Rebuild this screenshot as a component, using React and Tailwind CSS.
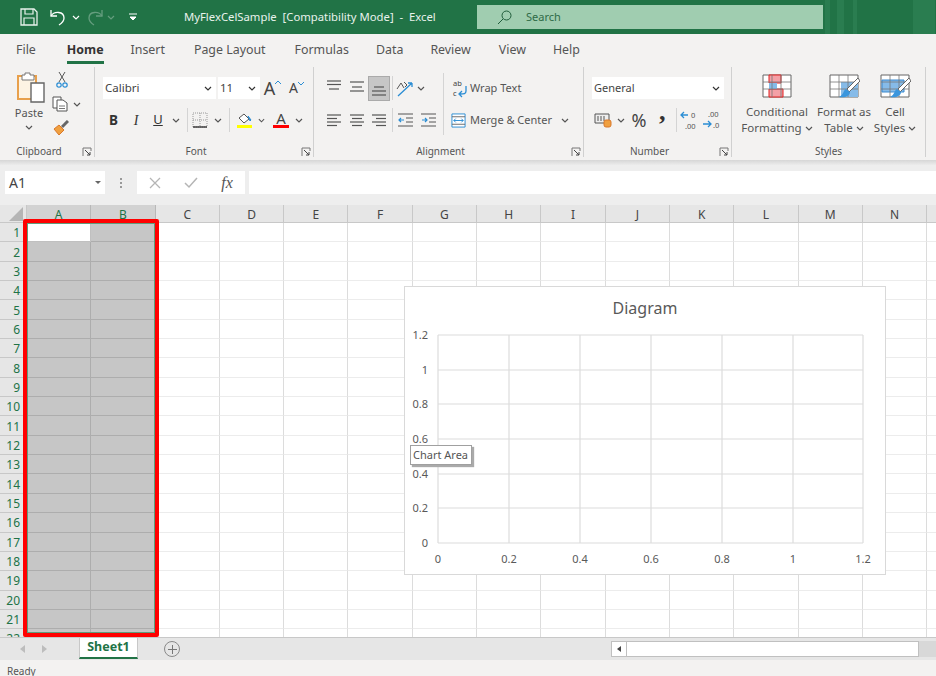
import React from 'react';

const columns = ['A', 'B', 'C', 'D', 'E', 'F', 'G', 'H', 'I', 'J', 'K', 'L', 'M', 'N', ''];
const rows = Array.from({ length: 22 }, (_, i) => i + 1);
const tabs = [
    ['File', 'ml-[16px]'], ['Home', 'ml-[31px]'], ['Insert', 'ml-[27px]'], ['Page Layout', 'ml-[29px]'],
    ['Formulas', 'ml-[29px]'], ['Data', 'ml-[27px]'], ['Review', 'ml-[27px]'], ['View', 'ml-[28px]'], ['Help', 'ml-[27px]'],
];

const Chev = ({ className = 'text-[#555]' }) => (
    <svg width="8" height="5" viewBox="0 0 8 5" className={className}>
        <path d="M1 1l3 3 3-3" fill="none" stroke="currentColor" strokeWidth="1.2" />
    </svg>
);

const Slot = ({ w, children }) => (
    <div className={`${w} h-full flex items-center justify-center shrink-0`}>{children}</div>
);

const Sep = ({ className = 'h-[24px]' }) => <div className={`w-px bg-[#d4d4d4] shrink-0 ${className}`}></div>;

const Lines = ({ rows }) => (
    <svg width="16" height="16" viewBox="0 0 16 16">
        {rows.map(([x1, x2, y]) => <path key={y} d={`M${x1} ${y}H${x2}`} stroke="#555" strokeWidth="1.2" />)}
    </svg>
);

const Launcher = () => (
    <svg width="10" height="10" viewBox="0 0 10 10" className="absolute right-[2px] top-[1px]">
        <path d="M1 9V1h8v3" fill="none" stroke="#777" />
        <path d="M3 3l5 5M8 5v3H5" fill="none" stroke="#444" />
    </svg>
);

function Group({ w, label, launcher = true, children }) {
    return (
        <div className={`${w} h-[90px] flex flex-col shrink-0 border-r border-[#d0d0d0] mt-[1px] relative`}>
            <div className="flex-1 min-h-0">{children}</div>
            <div className={`relative h-[11px] text-center text-[10px] leading-[11px] text-[#555] ${launcher ? 'pr-[16px]' : ''}`}>
                {label}
                {launcher && <Launcher />}
            </div>
        </div>
    );
}

function Combo({ w, text, size = 'text-[11.5px]' }) {
    return (
        <div className={`${w} h-[22px] bg-white flex items-center justify-between pl-[2px] pr-[4px] ${size} text-[#444] shrink-0`}>
            <span>{text}</span><Chev className="text-[#333]" />
        </div>
    );
}

function TableIcon({ kind }) {
    return (
        <svg width="32" height="24" viewBox="0 0 32 24">
            <path d="M2 1h28v22H2z" fill="#fff" stroke="#666" />
            {kind === 'cond' && <>
                <path d="M8 1h12v8H8zM8 15h14v8H8z" fill="#f4a0a6" stroke="#e02020" />
                <path d="M8 9h8v6H8z" fill="#86bbe8" />
            </>}
            {kind === 'table' && <path d="M13 8h17v15H13z" fill="#86bbe8" />}
            {kind === 'cell' && <path d="M3 6h22v12H3z" fill="#86bbe8" stroke="#3a8ad0" />}
            <path d="M2 8h28M2 15h28M11 1v22M20 1v22" fill="none" stroke="#777" strokeWidth="0.8" />
            {kind !== 'cond' && <>
                <path d="M30 4L19 15l2 3L32 7z" fill="#fff" stroke="#666" />
                <path d="M18 15c-3 1-2 6-7 8 6 1 11-1 11-5z" fill="#3a96dd" />
            </>}
        </svg>
    );
}

function StyleItem({ w, kind, a, b }) {
    return (
        <div className={`${w} h-full flex flex-col items-center shrink-0 pt-[7px]`}>
            <TableIcon kind={kind} />
            <div className="mt-[6px] text-[11.5px] leading-[16px] text-center text-[#555] whitespace-nowrap">{a}</div>
            <div className="text-[11.5px] leading-[16px] text-[#555] whitespace-nowrap flex items-center gap-[3px]">{b}<Chev /></div>
        </div>
    );
}

function Ribbon() {
    return (
        <div className="h-[94px] flex">
            <Group w="w-[95px]" label="Clipboard">
                <div className="flex h-full">
                    <div className="w-[57px] flex flex-col items-center pt-[5px] pl-[1px]">
                        <svg width="32" height="32" viewBox="0 0 32 32">
                            <path d="M5 4h18v23H5z" fill="#fdf3e3" stroke="#e8a04c" strokeWidth="2" />
                            <path d="M12 1h5v2h4v5H9V3h3z" fill="#fff" stroke="#777" />
                            <path d="M18 11h13v19H18z" fill="#fff" stroke="#666" strokeWidth="1.4" />
                        </svg>
                        <div className="mt-[1px] text-[11px] leading-[16px] text-[#555]">Paste</div>
                        <div className="mt-[4px]"><Chev /></div>
                    </div>
                    <div className="flex flex-col pt-[5px]">
                        <svg width="12" height="16" viewBox="0 0 12 16" className="ml-[-1px]">
                            <path d="M3 0l6 10M9 0L3 10" stroke="#555" fill="none" />
                            <circle cx="3" cy="13" r="2.2" fill="none" stroke="#2a8dd4" strokeWidth="1.2" />
                            <circle cx="9" cy="13" r="2.2" fill="none" stroke="#2a8dd4" strokeWidth="1.2" />
                        </svg>
                        <div className="flex items-center gap-[5px] mt-[8px] ml-[-5px]">
                            <svg width="16" height="16" viewBox="0 0 16 16">
                                <path d="M1 1h8v11H1z" fill="#fff" stroke="#555" />
                                <path d="M5 4h6l4 3v8H5z" fill="#fff" stroke="#555" />
                                <path d="M7 10h6M7 12.5h6" stroke="#777" />
                            </svg>
                            <Chev />
                        </div>
                        <svg width="16" height="15" viewBox="0 0 16 15" className="mt-[8px] ml-[-4px]">
                            <path d="M1 9l5 6 5-5-5-5z" fill="#f0a040" stroke="#d9782a" />
                            <path d="M9 7l6-6" stroke="#666" strokeWidth="3" />
                        </svg>
                    </div>
                </div>
            </Group>

            <Group w="w-[219px]" label="Font">
                <div className="pl-[8px] pt-[10px]">
                    <div className="flex h-[22px] items-center">
                        <Combo w="w-[113px]" text="Calibri" />
                        <div className="w-[2px]"></div>
                        <Combo w="w-[42px]" text="11" />
                        <Slot w="w-[25px]">
                            <span className="text-[18px] text-[#444] leading-none">A</span>
                            <svg width="6" height="4" viewBox="0 0 6 4" className="mb-[10px] text-[#2a8dd4]"><path d="M0 3l3-3 3 3" fill="none" stroke="currentColor" /></svg>
                        </Slot>
                        <Slot w="w-[23px]">
                            <span className="text-[14px] text-[#444] leading-none">A</span>
                            <svg width="6" height="4" viewBox="0 0 6 4" className="mb-[8px] text-[#2a8dd4]"><path d="M0 0l3 3 3-3" fill="none" stroke="currentColor" /></svg>
                        </Slot>
                    </div>
                    <div className="flex h-[24px] items-center mt-[9px]">
                        <Slot w="w-[21px]"><span className="font-bold text-[13.5px] text-[#333]">B</span></Slot>
                        <Slot w="w-[24px]"><span className="italic text-[14px] text-[#333]" style={{ fontFamily: 'Liberation Serif, serif' }}>I</span></Slot>
                        <Slot w="w-[20px]"><span className="underline text-[13px] text-[#333]">U</span></Slot>
                        <Slot w="w-[16px]"><Chev /></Slot>
                        <div className="w-[3px]"></div>
                        <Sep />
                        <Slot w="w-[24px]">
                            <svg width="16" height="16" viewBox="0 0 16 16">
                                <path d="M1 1h14v14H1zM8 1v14M1 8h14" fill="none" stroke="#999" strokeDasharray="1 1" />
                                <path d="M1 15h14" stroke="#333" strokeWidth="1.4" />
                            </svg>
                        </Slot>
                        <Slot w="w-[12px]"><Chev /></Slot>
                        <div className="w-[5px]"></div>
                        <Sep />
                        <Slot w="w-[28px]">
                            <svg width="17" height="17" viewBox="0 0 17 17">
                                <path d="M3 6l5-4 5 5-5 4z" fill="#fff" stroke="#555" />
                                <path d="M12 4l3 4-1 1z" fill="#2a8dd4" stroke="#2a8dd4" />
                                <path d="M1 13h15v3H1z" fill="#ffff00" />
                            </svg>
                        </Slot>
                        <Slot w="w-[7px]"><Chev /></Slot>
                        <div className="w-[4px]"></div>
                        <Slot w="w-[24px]">
                            <div className="flex flex-col items-center">
                                <span className="text-[15px] leading-[13px] text-[#444]">A</span>
                                <div className="w-[16px] h-[3px] bg-[#ff0000]"></div>
                            </div>
                        </Slot>
                        <Slot w="w-[12px]"><Chev /></Slot>
                    </div>
                </div>
            </Group>

            <Group w="w-[270px]" label="Alignment">
                <div className="flex h-full">
                    <div className="w-[129px] pl-[8px] pt-[8px] shrink-0">
                        <div className="flex h-[26px] items-center">
                            <Slot w="w-[23px]"><Lines rows={[[1, 15, 1], [1, 15, 4.5], [3, 13, 9]]} /></Slot>
                            <Slot w="w-[23px]"><Lines rows={[[1, 15, 2], [3, 13, 7], [1, 15, 11]]} /></Slot>
                            <div className="w-[22px] h-[25px] bg-[#c6c6c6] border border-[#aaa] flex items-center justify-center"><Lines rows={[[3, 13, 7], [1, 15, 11], [1, 15, 15]]} /></div>
                            <div className="w-[2px]"></div>
                            <Sep />
                            <Slot w="w-[24px]">
                                <svg width="18" height="17" viewBox="0 0 18 17">
                                    <path d="M2 16L16 3M16 3h-4M16 3v4" fill="none" stroke="#2a8dd4" strokeWidth="1.3" />
                                    <path d="M1 9l4-6 3 5M8 2l3 3-2 2" fill="none" stroke="#555" />
                                </svg>
                            </Slot>
                            <Slot w="w-[8px]"><Chev /></Slot>
                        </div>
                        <div className="flex h-[24px] items-center mt-[7px]">
                            <Slot w="w-[23px]"><Lines rows={[[1, 15, 3], [1, 11, 6.5], [1, 15, 10], [1, 11, 13.5]]} /></Slot>
                            <Slot w="w-[23px]"><Lines rows={[[1, 15, 3], [3, 13, 6.5], [1, 15, 10], [3, 13, 13.5]]} /></Slot>
                            <Slot w="w-[22px]"><Lines rows={[[1, 15, 3], [5, 15, 6.5], [1, 15, 10], [5, 15, 13.5]]} /></Slot>
                            <div className="w-[2px]"></div>
                            <Sep />
                            <Slot w="w-[25px]">
                                <svg width="16" height="14" viewBox="0 0 16 14">
                                    <path d="M0 1h15M8 5h7M8 9h7M0 13h15" stroke="#555" />
                                    <path d="M6 7H1M3 5L1 7l2 2" fill="none" stroke="#2a8dd4" strokeWidth="1.2" />
                                </svg>
                            </Slot>
                            <Slot w="w-[21px]">
                                <svg width="16" height="14" viewBox="0 0 16 14">
                                    <path d="M0 1h15M8 5h7M8 9h7M0 13h15" stroke="#555" />
                                    <path d="M1 7h5M4 5l2 2-2 2" fill="none" stroke="#2a8dd4" strokeWidth="1.2" />
                                </svg>
                            </Slot>
                        </div>
                    </div>
                    <Sep className="h-[62px] mt-[6px]" />
                    <div className="pt-[8px]">
                        <div className="flex h-[26px] items-center ml-[9px]">
                            <svg width="15" height="18" viewBox="0 0 15 18" className="overflow-visible">
                                <text x="0" y="7" fontSize="7.5" fill="#444">ab</text>
                                <text x="0" y="17" fontSize="7.5" fill="#444">c</text>
                                <path d="M13 7v5c0 3-2 3-6 3M9 12l-3 3 3 3" fill="none" stroke="#2a8dd4" strokeWidth="1.3" />
                            </svg>
                            <span className="ml-[2px] text-[11px] text-[#555]">Wrap Text</span>
                        </div>
                        <div className="flex h-[24px] items-center ml-[7px] mt-[7px]">
                            <svg width="15" height="15" viewBox="0 0 16 16">
                                <path d="M1 1h14v14H1z" fill="#fff" stroke="#2a8dd4" />
                                <path d="M1 4h14M1 12h14" stroke="#666" />
                                <path d="M3 8h10M5 6L3 8l2 2M11 6l2 2-2 2" fill="none" stroke="#2a8dd4" />
                            </svg>
                            <span className="ml-[4px] text-[11px] text-[#555] whitespace-nowrap">Merge &amp; Center</span>
                            <div className="ml-[9px] flex"><Chev /></div>
                        </div>
                    </div>
                </div>
            </Group>

            <Group w="w-[148px]" label="Number">
                <div className="pl-[8px] pt-[10px]">
                    <Combo w="w-[132px]" text="General" size="text-[11px]" />
                    <div className="flex h-[24px] items-center mt-[9px]">
                        <Slot w="w-[22px]">
                            <svg width="18" height="16" viewBox="0 0 18 16">
                                <path d="M1 2h14v9H1z" fill="#eee" stroke="#555" />
                                <path d="M4 4v5M7 4v5M10 4v5" stroke="#555" />
                                <rect x="10" y="8" width="7" height="7" rx="2" fill="#f0a040" stroke="#d9782a" />
                            </svg>
                        </Slot>
                        <Slot w="w-[14px]"><Chev /></Slot>
                        <Slot w="w-[22px]"><span className="text-[18px] text-[#444] leading-none">%</span></Slot>
                        <Slot w="w-[24px]"><span className="text-[26px] h-[14px] font-bold text-[#333] leading-[24px]" style={{ fontFamily: 'Liberation Serif, serif' }}>’</span></Slot>
                        <div className="w-[2px]"></div>
                        <Sep />
                        <Slot w="w-[26px]">
                            <svg width="20" height="20" viewBox="0 0 20 20" className="overflow-visible">
                                <path d="M8 5H1M4 2L1 5l3 3" fill="none" stroke="#2a8dd4" strokeWidth="1.3" />
                                <text x="11" y="8" fontSize="7.5" fill="#555">0</text>
                                <text x="5" y="19" fontSize="7.5" fill="#555">.00</text>
                            </svg>
                        </Slot>
                        <Slot w="w-[18px]">
                            <svg width="20" height="20" viewBox="0 0 20 20" className="overflow-visible">
                                <text x="6" y="7" fontSize="7.5" fill="#555">.00</text>
                                <path d="M1 14h8M6 11l3 3-3 3" fill="none" stroke="#2a8dd4" strokeWidth="1.3" />
                                <text x="11" y="18" fontSize="7.5" fill="#555">.0</text>
                            </svg>
                        </Slot>
                    </div>
                </div>
            </Group>

            <Group w="w-[194px]" label="Styles" launcher={false}>
                <div className="flex h-full pl-[8px]">
                    <StyleItem w="w-[74px]" kind="cond" a="Conditional" b="Formatting" />
                    <StyleItem w="w-[60px]" kind="table" a="Format as" b="Table" />
                    <StyleItem w="w-[42px]" kind="cell" a="Cell" b="Styles" />
                </div>
            </Group>
        </div>
    );
}

function SheetGrid() {
    return (
        <div className="relative h-[432px] shrink-0 overflow-hidden bg-white">
            <div className="grid grid-cols-[27px_repeat(15,64.3px)] grid-rows-[18px_repeat(22,19.35px)]">
                <div className="bg-[#e6e6e6] border-r border-b border-[#c8c8c8] flex items-end justify-end pr-[3px] pb-[1px]">
                    <div className="w-0 h-0 border-l-[14px] border-l-transparent border-b-[14px] border-b-[#b5b5b5]"></div>
                </div>
                {columns.map((c, i) => (
                    <div key={i} className={`flex items-center justify-center pt-[2px] text-[12px] border-r border-b ${i < 2 ? 'bg-[#d2d2d2] text-[#217346] border-[#b8b8b8]' : 'bg-[#e6e6e6] text-[#444] border-[#c8c8c8]'}`}>{c}</div>
                ))}
                {rows.map(r => (
                    <React.Fragment key={r}>
                        <div className="bg-[#e6e6e6] border-r border-b border-[#c8c8c8] text-[#217346] text-[12px] flex items-center justify-end pr-[6px] pt-[2px]">{r}</div>
                        {columns.map((c, i) => (
                            <div key={i} className={`border-r border-b ${i < 2 ? (r === 1 && i === 0 ? 'bg-white border-[#c0c0c0]' : 'bg-[#c6c6c6] border-[#adadad]') : 'bg-white border-r-[#dcdcdc] border-b-[#ececec]'}`}></div>
                        ))}
                    </React.Fragment>
                ))}
            </div>

            {/* selection frame */}
            <div className="absolute left-[23px] top-[14px] w-[136px] h-[418px] border-[4px] border-[#ff0000] rounded-[2px]">
                <div className="w-full h-full border border-[#5f9c7c]"></div>
            </div>

            {/* chart */}
            <div className="absolute left-[404px] top-[81px] w-[482px] h-[289px] bg-white border border-[#d9d9d9]">
                <svg width="480" height="287" viewBox="0 0 480 287" className="block" style={{ fontFamily: 'Noto Sans, sans-serif' }}>
                    <text x="240" y="27" textAnchor="middle" fontSize="16" fill="#595959">Diagram</text>
                    {[33, 104, 175, 246, 317, 388, 458].map(x => <path key={x} d={`M${x} 48V256`} stroke="#dcdcdc" strokeWidth="1.2" />)}
                    {[48, 83, 117, 152, 187, 221, 256].map(y => <path key={y} d={`M33 ${y}H458`} stroke="#dcdcdc" strokeWidth="1.2" />)}
                    {['1.2', '1', '0.8', '0.6', '0.4', '0.2', '0'].map((t, i) => (
                        <text key={t} x="23" y={[52, 87, 121, 156, 191, 225, 260][i]} textAnchor="end" fontSize="11" fill="#595959">{t}</text>
                    ))}
                    {['0', '0.2', '0.4', '0.6', '0.8', '1', '1.2'].map((t, i) => (
                        <text key={t} x={[33, 104, 175, 246, 317, 388, 458][i]} y="276" textAnchor="middle" fontSize="11" fill="#595959">{t}</text>
                    ))}
                </svg>
                <div className="absolute left-[5px] top-[158px] w-[62px] h-[20px] bg-white border border-[#a0a0a0] shadow-[2px_2px_1px_#aaa] text-[11px] leading-[18px] pl-[2px] text-[#555] whitespace-nowrap">Chart Area</div>
            </div>
        </div>
    );
}

export default function App() {
    return (
        <div className="w-[936px] h-[676px] overflow-hidden bg-[#efefef] flex flex-col" style={{ fontFamily: 'Noto Sans, sans-serif' }}>
            {/* Title bar */}
            <div className="h-[34px] bg-[#217346] flex items-center relative shrink-0">
                <svg width="18" height="18" viewBox="0 0 18 18" className="ml-[20px]">
                    <path d="M1 1h13l3 3v13H1z" fill="none" stroke="#e8f2ec" strokeWidth="1.3" />
                    <path d="M5 1v5h8V1M4 17v-7h10v7" fill="none" stroke="#e8f2ec" strokeWidth="1.2" />
                </svg>
                <svg width="18" height="18" viewBox="0 0 18 18" className="ml-[11px]">
                    <path d="M2 2v6h6" fill="none" stroke="#fff" strokeWidth="1.3" />
                    <path d="M2 8c3-5 13-5 13 2 0 3-2 5-5 7" fill="none" stroke="#fff" strokeWidth="1.3" />
                </svg>
                <div className="ml-[5px] flex"><Chev className="text-white" /></div>
                <svg width="18" height="18" viewBox="0 0 18 18" className="ml-[6px] opacity-30">
                    <path d="M16 2v6h-6" fill="none" stroke="#fff" strokeWidth="1.3" />
                    <path d="M16 8c-3-5-13-5-13 2 0 3 2 5 5 7" fill="none" stroke="#fff" strokeWidth="1.3" />
                </svg>
                <div className="ml-[3px] flex opacity-30"><Chev className="text-white" /></div>
                <svg width="8" height="8" viewBox="0 0 8 8" className="ml-[14px]">
                    <path d="M0 1h8M1 4l3 3 3-3z" fill="#fff" stroke="#fff" />
                </svg>
                <div className="ml-[47px] w-[254px] shrink-0 text-[11.3px] text-[#e8f2ec] whitespace-pre">MyFlexCelSample  [Compatibility Mode]  -  Excel</div>
                <div className="ml-[39px] w-[346px] h-[24px] shrink-0 bg-[#a0cdb0] flex items-center pl-[20px]">
                    <svg width="15" height="15" viewBox="0 0 15 15">
                        <circle cx="9.5" cy="5.5" r="4.5" fill="none" stroke="#1f5c3a" />
                        <path d="M6 9l-5 5" stroke="#1f5c3a" />
                    </svg>
                    <span className="ml-[14px] text-[11px] text-[#2f6b47]">Search</span>
                </div>
                <div className="ml-[2px] flex-1 h-full flex items-stretch">
                    <div className="w-[5px] bg-[#2a7d50]"></div>
                    <div className="w-[7px] ml-[7px] bg-[#2a7d50]"></div>
                    <div className="w-[4px] ml-[9px] bg-[#2a7d50]"></div>
                    <div className="w-[22px] ml-[56px] bg-[#2a7d50]"></div>
                </div>
            </div>

            {/* Ribbon */}
            <div className="bg-[#f3f2f1] shrink-0">
                <div className="h-[32px] flex items-center text-[12.4px] text-[#555]">
                    {tabs.map(([t, m]) => (
                        <div key={t} className={`${m} relative whitespace-nowrap ${t === 'Home' ? 'font-bold text-[#333]' : ''}`}>
                            {t}
                            {t === 'Home' && <div className="absolute left-0 right-0 top-[20px] h-[3px] bg-[#217346]"></div>}
                        </div>
                    ))}
                </div>
                <Ribbon />
            </div>
            <div className="h-[5px] bg-linear-to-b from-[#d6d6d6] to-[#ececec] shrink-0"></div>

            {/* Formula bar */}
            <div className="h-[40px] flex shrink-0 pt-[6px] pl-[5px] bg-[#eeeeee]">
                <div className="w-[100px] h-[23px] bg-white flex items-center justify-between pl-[4px] pr-[4px] text-[14px] text-[#444]">
                    <span>A1</span>
                    <svg width="6" height="4" viewBox="0 0 6 4"><path d="M0 0h6L3 3z" fill="#666" /></svg>
                </div>
                <div className="w-[32px] h-[23px] flex flex-col items-center justify-center gap-[2px]">
                    <div className="w-[2px] h-[2px] bg-[#999]"></div>
                    <div className="w-[2px] h-[2px] bg-[#999]"></div>
                    <div className="w-[2px] h-[2px] bg-[#999]"></div>
                </div>
                <div className="w-[108px] h-[23px] bg-white flex items-center">
                    <Slot w="w-[36px]"><svg width="12" height="12" viewBox="0 0 12 12"><path d="M1 1l10 10M11 1L1 11" stroke="#b5b5b5" strokeWidth="1.3" /></svg></Slot>
                    <Slot w="w-[36px]"><svg width="14" height="12" viewBox="0 0 14 12"><path d="M1 6l4 4 8-9" fill="none" stroke="#b5b5b5" strokeWidth="1.5" /></svg></Slot>
                    <Slot w="w-[36px]"><span className="italic text-[16px] text-[#555]" style={{ fontFamily: 'Liberation Serif, serif' }}>fx</span></Slot>
                </div>
                <div className="ml-[4px] flex-1 h-[23px] bg-white"></div>
            </div>

            <SheetGrid />

            {/* Sheet tabs */}
            <div className="h-[23px] bg-[#e6e6e6] border-t border-[#c8c8c8] flex items-center shrink-0">
                <svg width="6" height="8" viewBox="0 0 6 8" className="ml-[20px]"><path d="M5 0v8L0 4z" fill="#bdbdbd" /></svg>
                <svg width="6" height="8" viewBox="0 0 6 8" className="ml-[16px]"><path d="M0 0v8l5-4z" fill="#bdbdbd" /></svg>
                <div className="ml-[31px] w-[59px] h-[21px] self-start bg-white border-x border-[#c8c8c8] border-b-2 border-b-[#217346] text-[12.5px] font-bold text-[#217346] flex items-center justify-center">Sheet1</div>
                <div className="ml-[26px] w-[16px] h-[16px] rounded-full border border-[#8a8a8a] flex items-center justify-center">
                    <svg width="9" height="9" viewBox="0 0 9 9"><path d="M4.5 0v9M0 4.5h9" stroke="#777" /></svg>
                </div>
                <div className="ml-[431px] w-[16px] h-[16px] bg-white border border-[#c0c0c0] flex items-center justify-center">
                    <svg width="4" height="6" viewBox="0 0 4 6"><path d="M4 0v6L0 3z" fill="#444" /></svg>
                </div>
                <div className="w-[292px] h-[16px] bg-white border-y border-r border-[#c0c0c0]"></div>
                <div className="flex-1 h-[16px] bg-[#d8d8d8]"></div>
            </div>

            {/* Status bar */}
            <div className="h-[16px] shrink-0 overflow-hidden bg-[#f3f2f1] pl-[7px] text-[10px] leading-[22px] text-[#555]">Ready</div>
        </div>
    );
}
